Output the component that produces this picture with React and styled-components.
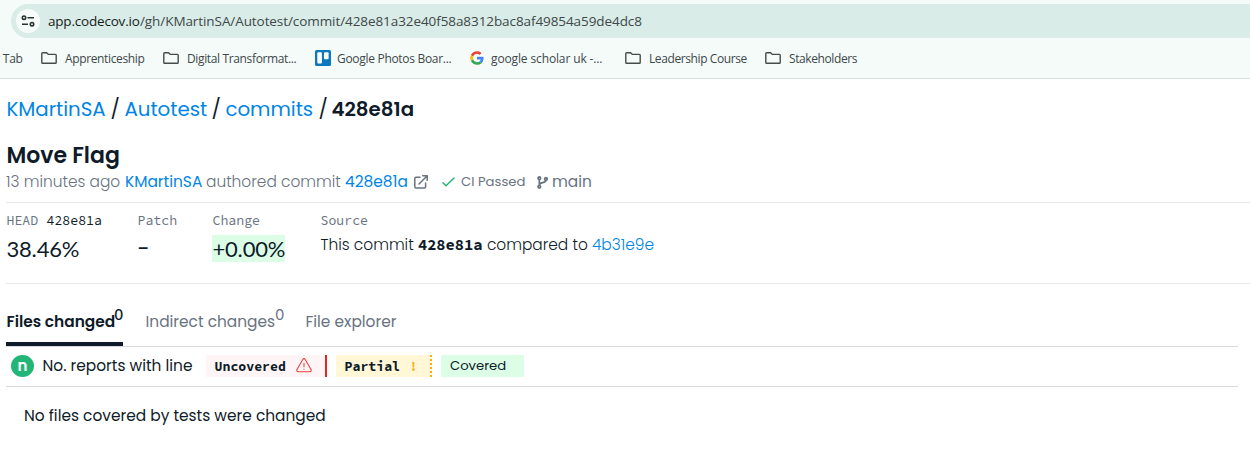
import React from "react";
import styled, { createGlobalStyle } from "styled-components";

const Global = createGlobalStyle`
  * { box-sizing: border-box; }
  body { margin: 0; background: #fff; overflow: hidden; }
`;

const geometric = `Poppins, Inter, "Liberation Sans", sans-serif`;
const mono = `"Source Code Pro", "DejaVu Sans Mono", monospace`;

const Page = styled.div`
  width: 1250px;
  height: 469px;
  overflow: hidden;
  background: #fff;
  color: #0e1b29;
  font-family: ${geometric};
  white-space: nowrap;
`;

const T = styled.span`
  flex: none;
  display: block;
  width: ${(p) => (p.$w ? p.$w + "px" : "auto")};
  letter-spacing: ${(p) => p.$ls || 0}px;
  font-weight: ${(p) => p.$weight || "inherit"};
  color: ${(p) => p.$color || "inherit"};
`;
const Small = styled(T)`
  font-size: 13.2px;
`;
const Code = styled(T)`
  font-family: ${mono};
  font-weight: 700;
`;

const Chrome = styled.header`
  height: 79px;
  padding-top: 4px;
  background: #f4fbf9;
  border-bottom: 1px solid #d5dfdc;
  font-family: "Segoe UI", "Open Sans", sans-serif;
`;
const AddressBar = styled.div`
  display: flex;
  align-items: center;
  height: 34px;
  margin-left: 11px;
  padding-left: 5px;
  border-radius: 17px 0 0 17px;
  background: #d9ece7;
  color: #40484a;
  font-size: 13.5px;
`;
const SiteButton = styled.div`
  display: flex;
  align-items: center;
  justify-content: center;
  width: 24px;
  height: 24px;
  margin-right: 8px;
  border-radius: 50%;
  background: #f6fcfa;
`;
const Bookmarks = styled.nav`
  display: flex;
  align-items: center;
  height: 40px;
  margin-left: -6px;
  font-size: 12px;
  color: #40484a;
`;
const Bookmark = styled.div`
  display: flex;
  align-items: center;
  flex: none;
  width: ${(p) => p.$w}px;
  letter-spacing: ${(p) => p.$ls || -0.36}px;
  svg { flex: none; margin-right: ${(p) => p.$gap || 8}px; }
  ${T} { letter-spacing: inherit; }
`;

const Content = styled.main`
  padding-left: 6px;
`;
const Crumbs = styled.div`
  display: flex;
  align-items: center;
  height: 60px;
  padding-left: 0.4px;
  font-size: 19.8px;
`;
const Title = styled.h1`
  margin: 0;
  padding-left: 0.4px;
  height: 32px;
  line-height: 33px;
  font-size: 22px;
  font-weight: 600;
`;
const Meta = styled.div`
  display: flex;
  align-items: center;
  height: 31px;
  padding-bottom: 9px;
  line-height: 22px;
  font-size: 15.4px;
  font-weight: 300;
  color: #68737f;
  svg { flex: none; }
  ${T} { margin-top: -1px; }
`;
const Summary = styled.section`
  display: flex;
  height: 82px;
  border-top: 1px solid #e6e8eb;
  border-bottom: 1px solid #e6e8eb;
`;
const Stat = styled.div`
  width: ${(p) => p.$w}px;
  padding-top: 9px;
`;
const Label = styled.div`
  display: flex;
  height: 18px;
  padding-left: 0.5px;
  line-height: 18px;
  font-family: ${mono};
  font-size: 13.2px;
  color: #68737f;
`;
const Value = styled.div`
  width: fit-content;
  height: 27px;
  margin-top: 5px;
  padding-left: 0.4px;
  line-height: 28px;
  font-family: ${(p) => (p.$dash ? geometric : "Lato, sans-serif")};
  font-size: 22px;
  letter-spacing: -0.15px;
  background: ${(p) => (p.$highlight ? "#dcfee6" : "transparent")};
`;
const Compare = styled.div`
  display: flex;
  align-items: center;
  height: 24px;
  margin-top: 2px;
  padding-left: 0.5px;
  font-size: 15.4px;
  font-weight: 300;
`;
const Tabs = styled.div`
  display: flex;
  height: 63px;
  width: 1232px;
  border-bottom: 1px solid #d6d9e0;
  font-size: 15.4px;
  color: #68737f;
`;
const Tab = styled.div`
  display: flex;
  width: ${(p) => p.$w}px;
  height: 62px;
  margin-right: ${(p) => p.$gap || 0}px;
  padding: 26px 0 0 0.5px;
  line-height: 24px;
  font-weight: ${(p) => (p.$active ? 600 : 400)};
  color: ${(p) => (p.$active ? "#0e1b29" : "inherit")};
  border-bottom: ${(p) => (p.$active ? "4px solid #0e1b29" : "0")};
`;
const Count = styled.span`
  margin-top: -7px;
  font-family: Lato, sans-serif;
  font-size: 14.5px;
  font-weight: ${(p) => (p.$active ? 600 : 400)};
`;
const Legend = styled.div`
  display: flex;
  align-items: center;
  width: 1232px;
  height: 40px;
  padding: 0 0 2px 5px;
  border-bottom: 1px solid #d6d9e0;
  font-size: 15.4px;
`;
const Badge = styled.div`
  display: flex;
  align-items: center;
  justify-content: center;
  width: 23px;
  height: 22px;
  margin-right: 8.5px;
  border-radius: 50%;
  background: #21b577;
  color: #fff;
  font-size: 15px;
  font-weight: 600;
`;
const Chip = styled.div`
  display: flex;
  align-items: center;
  width: ${(p) => p.$w}px;
  height: 22px;
  margin-right: 9px;
  padding-left: ${(p) => (p.$plain ? 9 : 8.6)}px;
  background: ${(p) => p.$bg};
  border-right: ${(p) => p.$edge || "0"};
  font-family: ${(p) => (p.$plain ? geometric : mono)};
  font-weight: ${(p) => (p.$plain ? 400 : 700)};
  font-size: 13.2px;
  ${T} { padding-top: ${(p) => (p.$plain ? 0 : 1)}px; }
`;
const Empty = styled.p`
  margin: 0;
  padding: 17px 0 0 18px;
  line-height: 24px;
  font-size: 15.4px;
`;

const Folder = () => (
  <svg width="16" height="12" viewBox="0 0 16 12" fill="none" stroke="#454d4b" strokeWidth="1.4">
    <path d="M.8 1.5q0-.8.8-.8h4l1.7 1.7h7.1q.8 0 .8.8v7.2q0 .8-.8.8H1.6q-.8 0-.8-.8z" />
  </svg>
);
const Tune = () => (
  <svg width="14" height="12" viewBox="0 0 14 12" fill="none" stroke="#27332f" strokeWidth="1.6">
    <circle cx="3" cy="2.7" r="1.7" />
    <path d="M6.5 2.7H13M1 9.2h6" />
    <circle cx="11" cy="9.2" r="1.7" />
  </svg>
);
const Trello = () => (
  <svg width="16" height="16" viewBox="0 0 16 16">
    <rect width="16" height="16" rx="1.5" fill="#0b79bf" />
    <rect x="2.3" y="2.2" width="4.6" height="11.2" rx="1" fill="#fff" />
    <rect x="9" y="2.2" width="4.6" height="7" rx="1" fill="#fff" />
  </svg>
);
const Google = () => (
  <svg width="16" height="16" viewBox="-4 -4 56 56">
    <circle cx="24" cy="24" r="28" fill="#fff" />
    <path fill="#EA4335" d="M24 9.5c3.54 0 6.71 1.22 9.21 3.6l6.85-6.85C35.9 2.38 30.47 0 24 0 14.62 0 6.51 5.38 2.56 13.22l7.98 6.19C12.43 13.72 17.74 9.5 24 9.5z" />
    <path fill="#4285F4" d="M46.98 24.55c0-1.57-.15-3.09-.38-4.55H24v9.02h12.94c-.58 2.96-2.26 5.48-4.78 7.18l7.73 6c4.51-4.18 7.09-10.36 7.09-17.65z" />
    <path fill="#FBBC05" d="M10.53 28.59A14.5 14.5 0 0 1 9.77 24c0-1.6.27-3.14.76-4.59l-7.98-6.19A23.9 23.9 0 0 0 0 24c0 3.88.92 7.54 2.56 10.78z" />
    <path fill="#34A853" d="M24 48c6.48 0 11.93-2.13 15.89-5.81l-7.73-6c-2.15 1.45-4.92 2.3-8.16 2.3-6.26 0-11.57-4.22-13.47-9.91l-7.98 6.19C6.51 42.62 14.62 48 24 48z" />
  </svg>
);
const External = () => (
  <svg width="14" height="14" viewBox="0 0 14 14" fill="none" stroke="#68737f" strokeWidth="1.5" strokeLinecap="round" strokeLinejoin="round">
    <path d="M6 2.2H2Q.8 2.200.8 3.400V11.800Q.8 13 2 13h8.400q1.200 0 1.200-1.200V8M8.700.8h4.500v4.500M13 1 5 9" />
  </svg>
);
const Check = () => (
  <svg width="13" height="10" viewBox="0 0 13 10" fill="none" stroke="#21b577" strokeWidth="1.5" strokeLinecap="round" strokeLinejoin="round">
    <path d="m1 5.700 3 3L12 1" />
  </svg>
);
const Branch = () => (
  <svg width="11" height="13" viewBox="0 0 11 13" fill="none" stroke="#68737f" strokeWidth="1.700">
    <circle cx="2.300" cy="2.200" r="1.300" />
    <circle cx="2.300" cy="10.800" r="1.300" />
    <circle cx="8.900" cy="3" r="1.300" />
    <path d="M2.300 3.500v6M8.900 4.300c0 3.200-6.300 1.400-6.600 4.500" />
  </svg>
);
const Warning = () => (
  <svg width="16" height="15" viewBox="0 0 16 15" fill="none" stroke="#f0423f" strokeWidth="1.100" strokeLinecap="round" strokeLinejoin="round">
    <path d="M6.800 1.500q1.200-1.700 2.400 0l5.800 10q.8 2-1.300 2.300H2.300Q.2 13.500 1 11.500zM8 5.300v3.500M8 11v.3" />
  </svg>
);

const blue = "#0085e6";

export default function App() {
  return (
    <Page>
      <Global />
      <Chrome>
        <AddressBar>
          <SiteButton><Tune /></SiteButton>
          <T $color="#171d1b" $w={92} $ls={-0.2}>app.codecov.io</T>
          <T $ls={-0.08}>/gh/KMartinSA/Autotest/commit/428e81a32e40f58a8312bac8af49854a59de4dc8</T>
        </AddressBar>
        <Bookmarks>
          <Bookmark $w={47} $ls={-0.2}><T>y Tab</T></Bookmark>
          <Bookmark $w={122}><Folder /><T>Apprenticeship</T></Bookmark>
          <Bookmark $w={152}><Folder /><T>Digital Transformat...</T></Bookmark>
          <Bookmark $w={154} $gap={6} $ls={-0.3}><Trello /><T>Google Photos Boar...</T></Bookmark>
          <Bookmark $w={156} $gap={6} $ls={-0.13}><Google /><T>google scholar uk -...</T></Bookmark>
          <Bookmark $w={140} $ls={-0.4}><Folder /><T>Leadership Course</T></Bookmark>
          <Bookmark $w={120} $ls={-0.4}><Folder /><T>Stakeholders</T></Bookmark>
        </Bookmarks>
      </Chrome>
      <Content>
        <Crumbs>
          <T $w={104} $color={blue}>KMartinSA</T><T $w={14}>/</T>
          <T $w={87} $color={blue}>Autotest</T><T $w={14}>/</T>
          <T $w={93} $color={blue}>commits</T><T $w={13}>/</T>
          <T $weight={600}>428e81a</T>
        </Crumbs>
        <Title>Move Flag</Title>
        <Meta>
          <T $w={119}>13 minutes ago</T>
          <T $w={81} $color={blue} $weight={400}>KMartinSA</T>
          <T $w={139}>authored commit</T>
          <T $w={69} $color={blue} $weight={400}>428e81a</T>
          <External />
          <T $w={14} />
          <Check />
          <T $w={6} />
          <Small $w={76} $weight={400}>CI Passed</Small>
          <Branch />
          <T $w={4} />
          <T $weight={400}>main</T>
        </Meta>
        <Summary>
          <Stat $w={131}>
            <Label><T $w={40}>HEAD</T><T $color="#0e1b29">428e81a</T></Label>
            <Value>38.46%</Value>
          </Stat>
          <Stat $w={75}><Label><T>Patch</T></Label><Value $dash>-</Value></Stat>
          <Stat $w={108}><Label><T>Change</T></Label><Value $highlight>+0.00%</Value></Stat>
          <Stat $w={600}>
            <Label><T>Source</T></Label>
            <Compare>
              <T $w={97.4}>This commit</T>
              <Code $w={69}>428e81a</Code>
              <T $w={105}>compared to</T>
              <T $color={blue}>4b31e9e</T>
            </Compare>
          </Stat>
        </Summary>
        <Tabs>
          <Tab $active $w={117} $gap={22}><T $w={108}>Files changed</T><Count $active>0</Count></Tab>
          <Tab $w={139} $gap={21}><T $w={130}>Indirect changes</T><Count>0</Count></Tab>
          <Tab $w={95}><T>File explorer</T></Tab>
        </Tabs>
        <Legend>
          <Badge>n</Badge>
          <T $w={163.5}>No. reports with line</T>
          <Chip $w={121} $bg="#fff5f6" $edge="2px solid #f0201f"><T $w={81.4}>Uncovered</T><Warning /></Chip>
          <Chip $w={96} $bg="#fff7d6" $edge="2px dotted #f4b01b"><T $w={65}>Partial</T><T $color="#f4b01b">!</T></Chip>
          <Chip $w={83} $bg="#dcfee6" $plain><T>Covered</T></Chip>
        </Legend>
        <Empty>No files covered by tests were changed</Empty>
      </Content>
    </Page>
  );
}
